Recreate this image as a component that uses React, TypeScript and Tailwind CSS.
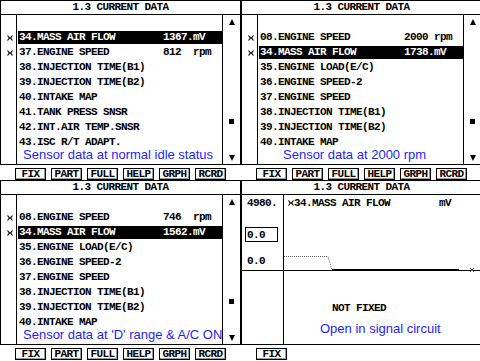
import React from "react";

type Row = { name: string; value?: string };

type ListPanel = {
  rows: Row[];
  selected: number;
  marked: number[];
  caption: string;
  captionPad: string;
};

// bitmap-ish look: 11px mono squeezed to a 6px pitch
const mono = "font-['Liberation_Mono',monospace] font-bold tracking-[-0.6px]";
const sans = "font-['Liberation_Sans',Arial,sans-serif]";

const BUTTONS = ["FIX", "PART", "FULL", "HELP", "GRPH", "RCRD"];

const panels: ListPanel[] = [
  {
    rows: [
      { name: "" },
      { name: "34.MASS AIR FLOW", value: "1367.mV" },
      { name: "37.ENGINE SPEED", value: "812  rpm" },
      { name: "38.INJECTION TIME(B1)" },
      { name: "39.INJECTION TIME(B2)" },
      { name: "40.INTAKE MAP" },
      { name: "41.TANK PRESS SNSR" },
      { name: "42.INT.AIR TEMP.SNSR" },
      { name: "43.ISC R/T ADAPT." },
    ],
    selected: 1,
    marked: [1, 2],
    caption: "Sensor data at normal idle status",
    captionPad: "pl-[6px]",
  },
  {
    rows: [
      { name: "" },
      { name: "08.ENGINE SPEED", value: "2000 rpm" },
      { name: "34.MASS AIR FLOW", value: "1738.mV" },
      { name: "35.ENGINE LOAD(E/C)" },
      { name: "36.ENGINE SPEED-2" },
      { name: "37.ENGINE SPEED" },
      { name: "38.INJECTION TIME(B1)" },
      { name: "39.INJECTION TIME(B2)" },
      { name: "40.INTAKE MAP" },
    ],
    selected: 2,
    marked: [1, 2],
    caption: "Sensor data at 2000 rpm",
    captionPad: "pl-[25px]",
  },
  {
    rows: [
      { name: "" },
      { name: "08.ENGINE SPEED", value: "746  rpm" },
      { name: "34.MASS AIR FLOW", value: "1562.mV" },
      { name: "35.ENGINE LOAD(E/C)" },
      { name: "36.ENGINE SPEED-2" },
      { name: "37.ENGINE SPEED" },
      { name: "38.INJECTION TIME(B1)" },
      { name: "39.INJECTION TIME(B2)" },
      { name: "40.INTAKE MAP" },
    ],
    selected: 2,
    marked: [1, 2],
    caption: "Sensor data at 'D' range & A/C ON",
    captionPad: "pl-[6px]",
  },
];

function Mark() {
  return (
    <svg width="6" height="6" viewBox="0 0 6 6" className="block">
      <path
        d="M0.5 0.5 L2.5 3 L0.5 5.5 M5.5 0.5 L3.5 3 L5.5 5.5 M1.5 3 H4.5"
        stroke="#000"
        strokeWidth="1.2"
        fill="none"
      />
    </svg>
  );
}

function Title() {
  return (
    <div
      className={`h-[14px] border-b border-black flex items-center justify-center text-[11px] leading-[13px] text-black ${mono}`}
    >
      1.3 CURRENT DATA
    </div>
  );
}

function ButtonBar({ labels }: { labels: string[] }) {
  return (
    <div className="flex gap-[5px] pl-[15px] mt-[3px] h-[12px]">
      {labels.map((label) => (
        <div
          key={label}
          className={`w-[31px] h-[12px] border border-black bg-white shadow-[inset_-1px_-1px_0_#9a9a9a] flex items-center justify-center text-[11px] leading-[10px] text-black ${mono}`}
        >
          {label}
        </div>
      ))}
    </div>
  );
}

function ScrollColumn() {
  return (
    <div className="w-[18px] border-l border-black flex flex-col items-center">
      <svg width="6" height="6" viewBox="0 0 6 6" className="mt-[4px] block">
        <path d="M3 0 L6 6 H0 Z" fill="#000" />
      </svg>
      <div className="mt-[94px] w-[5px] h-[5px] bg-black" />
      <svg width="6" height="6" viewBox="0 0 6 6" className="mt-[31px] block">
        <path d="M0 0 H6 L3 6 Z" fill="#000" />
      </svg>
    </div>
  );
}

function DataList({ panel }: { panel: ListPanel }) {
  return (
    <div className="flex flex-col">
      <div className="h-[165px] border border-black flex flex-col bg-white">
        <Title />
        <div className="flex flex-1 min-h-0">
          <div className="w-[16px] border-r border-black flex flex-col">
            {panel.rows.map((row, i) => (
              <div key={i} className="h-[15px] flex items-center pl-[6px]">
                {panel.marked.includes(i) ? <Mark /> : null}
              </div>
            ))}
          </div>
          <div className="flex-1 flex flex-col overflow-hidden">
            {panel.rows.map((row, i) => {
              const active = i === panel.selected;
              return (
                <div key={i} className="h-[15px] pl-[1px] py-[1px]">
                  <div
                    className={`h-[13px] pl-[1px] flex items-center text-[11px] leading-[13px] whitespace-pre ${mono} ${
                      active ? "bg-black text-white" : "text-black"
                    }`}
                  >
                    <span className="w-[144px] shrink-0">{row.name}</span>
                    {row.value ? <span>{row.value}</span> : null}
                  </div>
                </div>
              );
            })}
            <div
              className={`-mt-[2px] leading-[14px] text-[13px] whitespace-nowrap text-[#1e1eff] ${sans} ${panel.captionPad}`}
            >
              {panel.caption}
            </div>
          </div>
          <ScrollColumn />
        </div>
      </div>
      <ButtonBar labels={BUTTONS} />
    </div>
  );
}

function GraphPanel() {
  return (
    <div className="flex flex-col">
      <div className="h-[165px] border border-black flex flex-col bg-white">
        <Title />
        <div className="flex flex-col flex-1 min-h-0">
          <div className="h-[76px] border-b border-black flex">
            <div
              className={`w-[42px] border-r border-black flex flex-col text-[11px] leading-[10px] text-black ${mono}`}
            >
              <div className="pl-[5px] pt-[3px]">4980.</div>
              <div className="ml-[3px] mt-[19px] w-[33px] h-[15px] border border-black pl-[1px] flex items-center">
                0.0
              </div>
              <div className="pl-[5px] mt-[14px]">0.0</div>
            </div>
            <div className="flex-1 relative">
              <div
                className={`flex items-center pl-[4px] pt-[3px] text-[11px] leading-[10px] text-black ${mono}`}
              >
                <span className="w-[6px] shrink-0">
                  <Mark />
                </span>
                <span className="w-[145px] shrink-0">34.MASS AIR FLOW</span>
                <span>mV</span>
              </div>
              <svg
                width="200"
                height="77"
                viewBox="0 0 200 77"
                className="absolute top-0 left-0 overflow-visible"
              >
                <polyline
                  points="0,61.5 44,61.5 48,75"
                  fill="none"
                  stroke="#555"
                  strokeWidth="1"
                  strokeDasharray="1 1"
                />
                <line x1="48" y1="75" x2="175" y2="75" stroke="#000" strokeWidth="2" />
                <path d="M186 73 L190 77 M190 73 L186 77" stroke="#555" strokeWidth="1" />
              </svg>
            </div>
          </div>
          <div className="flex flex-1">
            <div className="w-[42px] border-r border-black" />
            <div className="flex-1 flex flex-col">
              <div
                className={`pl-[48px] pt-[32px] text-[11px] leading-[10px] text-black ${mono}`}
              >
                NOT FIXED
              </div>
              <div
                className={`pl-[36px] mt-[9px] text-[13px] leading-[14px] whitespace-nowrap text-[#1e1eff] ${sans}`}
              >
                Open in signal circuit
              </div>
            </div>
          </div>
        </div>
      </div>
      <ButtonBar labels={["FIX"]} />
    </div>
  );
}

export default function App() {
  return (
    <div className="w-[480px] h-[361px] overflow-hidden bg-white">
      <div className="grid grid-cols-[241px_241px] grid-rows-[180px_180px]">
        <DataList panel={panels[0]} />
        <DataList panel={panels[1]} />
        <DataList panel={panels[2]} />
        <GraphPanel />
      </div>
    </div>
  );
}
